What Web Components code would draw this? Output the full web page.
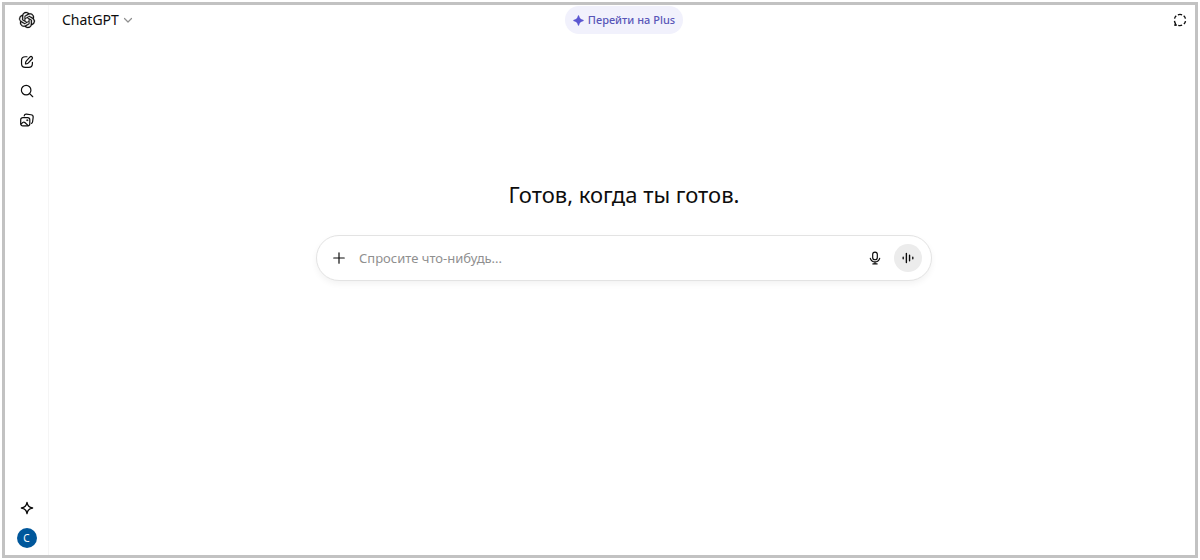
<!DOCTYPE html>
<html lang="ru">
<head>
<meta charset="utf-8">
<meta name="viewport" content="width=device-width, initial-scale=1">
<title>ChatGPT</title>
<style>
html, body { margin: 0; height: 100%; }
body { background: #fff; color: #0d0d0d; font-family: "Noto Sans", "Open Sans", sans-serif; font-size: 13px; }
</style>
</head>
<body>
<chat-app></chat-app>
<script>
const icons = {
  logo: '<svg viewBox="0 0 24 24" fill="currentColor" stroke="currentColor" stroke-width=".4"><path d="M22.2819 9.8211a5.9847 5.9847 0 0 0-.5157-4.9108 6.0462 6.0462 0 0 0-6.5098-2.9A6.0651 6.0651 0 0 0 4.9807 4.1818a5.9847 5.9847 0 0 0-3.9977 2.9 6.0462 6.0462 0 0 0 .7427 7.0966 5.98 5.98 0 0 0 .511 4.9107 6.051 6.051 0 0 0 6.5146 2.9001A5.9847 5.9847 0 0 0 13.2599 24a6.0557 6.0557 0 0 0 5.7718-4.2058 5.9894 5.9894 0 0 0 3.9977-2.9001 6.0557 6.0557 0 0 0-.7475-7.0729zm-9.022 12.6081a4.4755 4.4755 0 0 1-2.8764-1.0408l.1419-.0804 4.7783-2.7582a.7948.7948 0 0 0 .3927-.6813v-6.7369l2.02 1.1686a.071.071 0 0 1 .038.052v5.5826a4.504 4.504 0 0 1-4.4945 4.4944zm-9.6607-4.1254a4.4708 4.4708 0 0 1-.5346-3.0137l.142.0852 4.783 2.7582a.7712.7712 0 0 0 .7806 0l5.8428-3.3685v2.3324a.0804.0804 0 0 1-.0332.0615L9.74 19.9502a4.4992 4.4992 0 0 1-6.1408-1.6464zM2.3408 7.8956a4.485 4.485 0 0 1 2.3655-1.9728V11.6a.7664.7664 0 0 0 .3879.6765l5.8144 3.3543-2.0201 1.1685a.0757.0757 0 0 1-.071 0l-4.8303-2.7865A4.504 4.504 0 0 1 2.3408 7.8956zm16.5963 3.8558L13.1038 8.364 15.1192 7.2a.0757.0757 0 0 1 .071 0l4.8303 2.7913a4.4944 4.4944 0 0 1-.6765 8.1042v-5.6772a.79.79 0 0 0-.407-.667zm2.0107-3.0231l-.142-.0852-4.7735-2.7818a.7759.7759 0 0 0-.7854 0L9.409 9.2297V6.8974a.0662.0662 0 0 1 .0284-.0615l4.8303-2.7866a4.4992 4.4992 0 0 1 6.6802 4.66zM8.3065 12.863l-2.02-1.1638a.0804.0804 0 0 1-.038-.0567V6.0742a4.4992 4.4992 0 0 1 7.3757-3.4537l-.142.0805L8.704 5.459a.7948.7948 0 0 0-.3927.6813zm1.0976-2.3654l2.602-1.4998 2.6069 1.4998v2.9994l-2.5974 1.4997-2.6067-1.4997Z"/></svg>',
  edit: '<svg viewBox="0 0 20 20"><path d="M10 2.500H7.500C4.300 2.500 2.200 4.300 2.200 7.500v5c0 3.200 2.100 5.200 5.300 5.200h5c3.200 0 5.200-2 5.200-5.200V10.500"/><path d="M14.300 2.800a2.050 2.050 0 0 1 2.900 2.900l-5.600 5.800c-.8.800-2.400 1.200-3.800 1.200 0-1.400.3-3 1.100-3.900z"/></svg>',
  search: '<svg viewBox="0 0 20 20"><circle cx="8.800" cy="8.800" r="6.800"/><path d="m13.800 13.800 4.400 4.400"/></svg>',
  library: '<svg viewBox="0 0 20 20"><rect x="1" y="6.500" width="13" height="12" rx="3"/><path d="M6 4.200C6.400 2.100 7.500 1.500 9.300 1.700l6.400.8c2.200.3 3.400 1.500 3.100 3.700l-.8 6.300c-.2 1.200-.8 2-1.500 2.300M1.500 15.800l2.700-2.400c1-.8 1.800-.7 2.700.1l4.800 4.500"/><circle cx="10.300" cy="10.300" r="1" fill="currentColor" stroke-width=".6"/></svg>',
  sparkle: '<svg viewBox="0 0 20 20"><path stroke-width="1.900" d="M10 2c.7 4.600 3 7.200 8 8-5 .8-7.300 3.400-8 8-.7-4.600-3-7.200-8-8 5-.8 7.300-3.400 8-8z"/></svg>',
  star: '<svg viewBox="0 0 20 20"><path fill="currentColor" stroke="none" d="M10 .5c.8 0 1 .6 1.200 1.400.9 4 2.800 6 6.900 6.900.8.200 1.400.4 1.400 1.200s-.6 1-1.400 1.200c-4.100.9-6 2.900-6.900 6.900-.2.800-.4 1.400-1.200 1.400s-1-.6-1.200-1.400c-.9-4-2.800-6-6.900-6.900C1.100 11 .5 10.800.5 10s.6-1 1.400-1.200c4.100-.9 6-2.900 6.900-6.900C9 1.100 9.200.5 10 .5z"/></svg>',
  chevron: '<svg viewBox="0 0 20 20"><path stroke-width="2.400" d="m3 7 7 7 7-7"/></svg>',
  temporary: '<svg viewBox="0 0 20 20"><path stroke-width="2" stroke-linecap="butt" d="M7 2.600a8 8 0 0 1 6 0M15.300 4a8 8 0 0 1 2.500 4M17.900 11.500a8 8 0 0 1-2.300 4.200M13 17.400a8 8 0 0 1-5.500.2M2.200 8a8 8 0 0 1 2.400-4M2.100 11.200c.2 1.700.7 2.800 1.400 3.900l-.8 2.500 3-.6"/></svg>',
  plus: '<svg viewBox="0 0 20 20"><path d="M10 2.500v15M2.500 10h15"/></svg>',
  mic: '<svg viewBox="0 0 20 20"><rect x="6.700" y="1.500" width="6.600" height="11" rx="3.300"/><path d="M3.300 10.500c1 3.200 3.500 5 6.700 5s5.700-1.800 6.700-5M10 15.500v3M7 18.500h6"/></svg>',
  voice: '<svg viewBox="0 0 20 20"><path stroke-width="2.300" d="M2 8.800v2.400M7.300 2.500v15M12.600 5.500v9M18 8.800v2.400"/></svg>'
};

const define = (name, markup) => {
  const template = document.createElement('template');
  template.innerHTML = '<style>*{box-sizing:border-box}button,input{font:inherit;color:inherit}</style>' + markup;
  customElements.define(name, class extends HTMLElement {
    constructor() {
      super();
      this.attachShadow({ mode: 'open' }).append(template.content.cloneNode(true));
    }
  });
};

customElements.define('ui-icon', class extends HTMLElement {
  constructor() {
    super();
    this.attachShadow({ mode: 'open' });
  }
  connectedCallback() {
    this.shadowRoot.innerHTML = `<style>
      :host { display: block; flex: none; width: var(--icon-size, 14px); height: var(--icon-size, 14px); }
      svg { display: block; width: 100%; height: 100%; overflow: visible; }
      svg:not([fill]) { fill: none; stroke: currentColor; stroke-width: 1.7; stroke-linecap: round; stroke-linejoin: round; }
    </style>${icons[this.getAttribute('name')]}`;
    this.shadowRoot.querySelector('svg').setAttribute('aria-hidden', 'true');
  }
});

customElements.define('icon-button', class extends HTMLElement {
  constructor() {
    super();
    this.attachShadow({ mode: 'open' }).innerHTML = `<style>
      :host { display: block; flex: none; }
      button { display: grid; place-items: center; width: 28px; height: var(--button-height, 28px); padding: 0; border: 0; border-radius: 14px; background: var(--button-fill, none); color: inherit; cursor: pointer; }
    </style><button type="button"><slot></slot></button>`;
  }
  connectedCallback() {
    this.shadowRoot.querySelector('button').setAttribute('aria-label', this.getAttribute('label'));
  }
});

define('user-avatar', `<style>
  :host { display: block; }
  button { display: grid; place-items: center; width: 20px; height: 20px; padding: 0; border: 0; border-radius: 50%; background: #00579b; color: #fff; font-size: 10px; line-height: 20px; cursor: pointer; }
</style><button type="button"><slot></slot></button>`);

define('side-rail', `<style>
  :host { display: flex; flex-direction: column; align-items: center; flex: none; width: 44px; padding-bottom: 7px; border-right: 1px solid #f5f5f5; --button-height: 29px; }
  .logo { display: grid; place-items: center; height: 30px; color: inherit; }
  .logo ui-icon { --icon-size: 16px; }
  nav { margin-top: 12px; }
  .foot { display: flex; flex-direction: column; align-items: center; gap: 6px; margin-top: auto; }
</style>
<a class="logo" href="#" aria-label="ChatGPT"><ui-icon name="logo"></ui-icon></a>
<nav>
  <icon-button label="Новый чат"><ui-icon name="edit"></ui-icon></icon-button>
  <icon-button label="Поиск в чатах"><ui-icon name="search"></ui-icon></icon-button>
  <icon-button label="Библиотека"><ui-icon name="library"></ui-icon></icon-button>
</nav>
<div class="foot">
  <icon-button label="Перейти на Plus"><ui-icon name="sparkle"></ui-icon></icon-button>
  <user-avatar>С</user-avatar>
</div>`);

define('chat-header', `<style>
  :host { display: grid; grid-template-columns: 1fr auto 1fr; align-items: center; height: 30px; }
  button { display: flex; align-items: center; border: 0; cursor: pointer; }
  .model { justify-self: start; gap: 4px; padding: 0 8px; background: none; font-size: 14px; line-height: 20px; }
  .model ui-icon { --icon-size: 10px; color: #8f8f8f; }
  .plus { gap: 4px; height: 28px; padding: 0 8px; border-radius: 14px; background: #f1f1fc; color: #5856b8; font-size: 11px; font-weight: 500; line-height: 16px; }
  .plus ui-icon { --icon-size: 11px; color: #5b57d1; }
  icon-button { justify-self: end; }
</style>
<button class="model" type="button">ChatGPT<ui-icon name="chevron"></ui-icon></button>
<button class="plus" type="button"><ui-icon name="star"></ui-icon>Перейти на Plus</button>
<icon-button label="Временный чат"><ui-icon name="temporary"></ui-icon></icon-button>`);

define('chat-composer', `<style>
  :host { display: block; width: 100%; max-width: 616px; }
  form { display: flex; align-items: center; height: 46px; padding: 0 9px 0 8px; border: 1px solid #e3e3e3; border-radius: 23px; background: #fff; box-shadow: 0 3px 6px rgb(0 0 0 / 5%); }
  input { flex: 1; min-width: 0; height: 28px; padding: 0 6px; border: 0; outline: 0; background: none; font-size: 13px; }
  input::placeholder { color: #8f8f8f; opacity: 1; }
  .voice { margin-left: 5px; --button-fill: #ececec; --icon-size: 12px; }
</style>
<form>
  <icon-button label="Добавить файлы"><ui-icon name="plus"></ui-icon></icon-button>
  <input type="text" aria-label="Сообщение" placeholder="Спросите что-нибудь...">
  <icon-button label="Диктовка"><ui-icon name="mic"></ui-icon></icon-button>
  <icon-button class="voice" label="Голосовой режим"><ui-icon name="voice"></ui-icon></icon-button>
</form>`);

define('chat-app', `<style>
  :host { display: flex; box-sizing: border-box; min-height: 100vh; padding: 2px; }
  .frame { display: flex; flex: 1; border: 3px solid #c2c2c2; }
  .page { flex: 1; min-width: 0; padding: 0 1px 0 5px; }
  main { display: flex; flex-direction: column; align-items: center; gap: 24px; padding: 142px 16px 24px; }
  h1 { margin: 0; font-size: 22px; font-weight: 400; line-height: 34px; text-align: center; }
</style>
<div class="frame">
  <side-rail></side-rail>
  <div class="page">
    <chat-header></chat-header>
    <main>
      <h1>Готов, когда ты готов.</h1>
      <chat-composer></chat-composer>
    </main>
  </div>
</div>`);
</script>
</body>
</html>
